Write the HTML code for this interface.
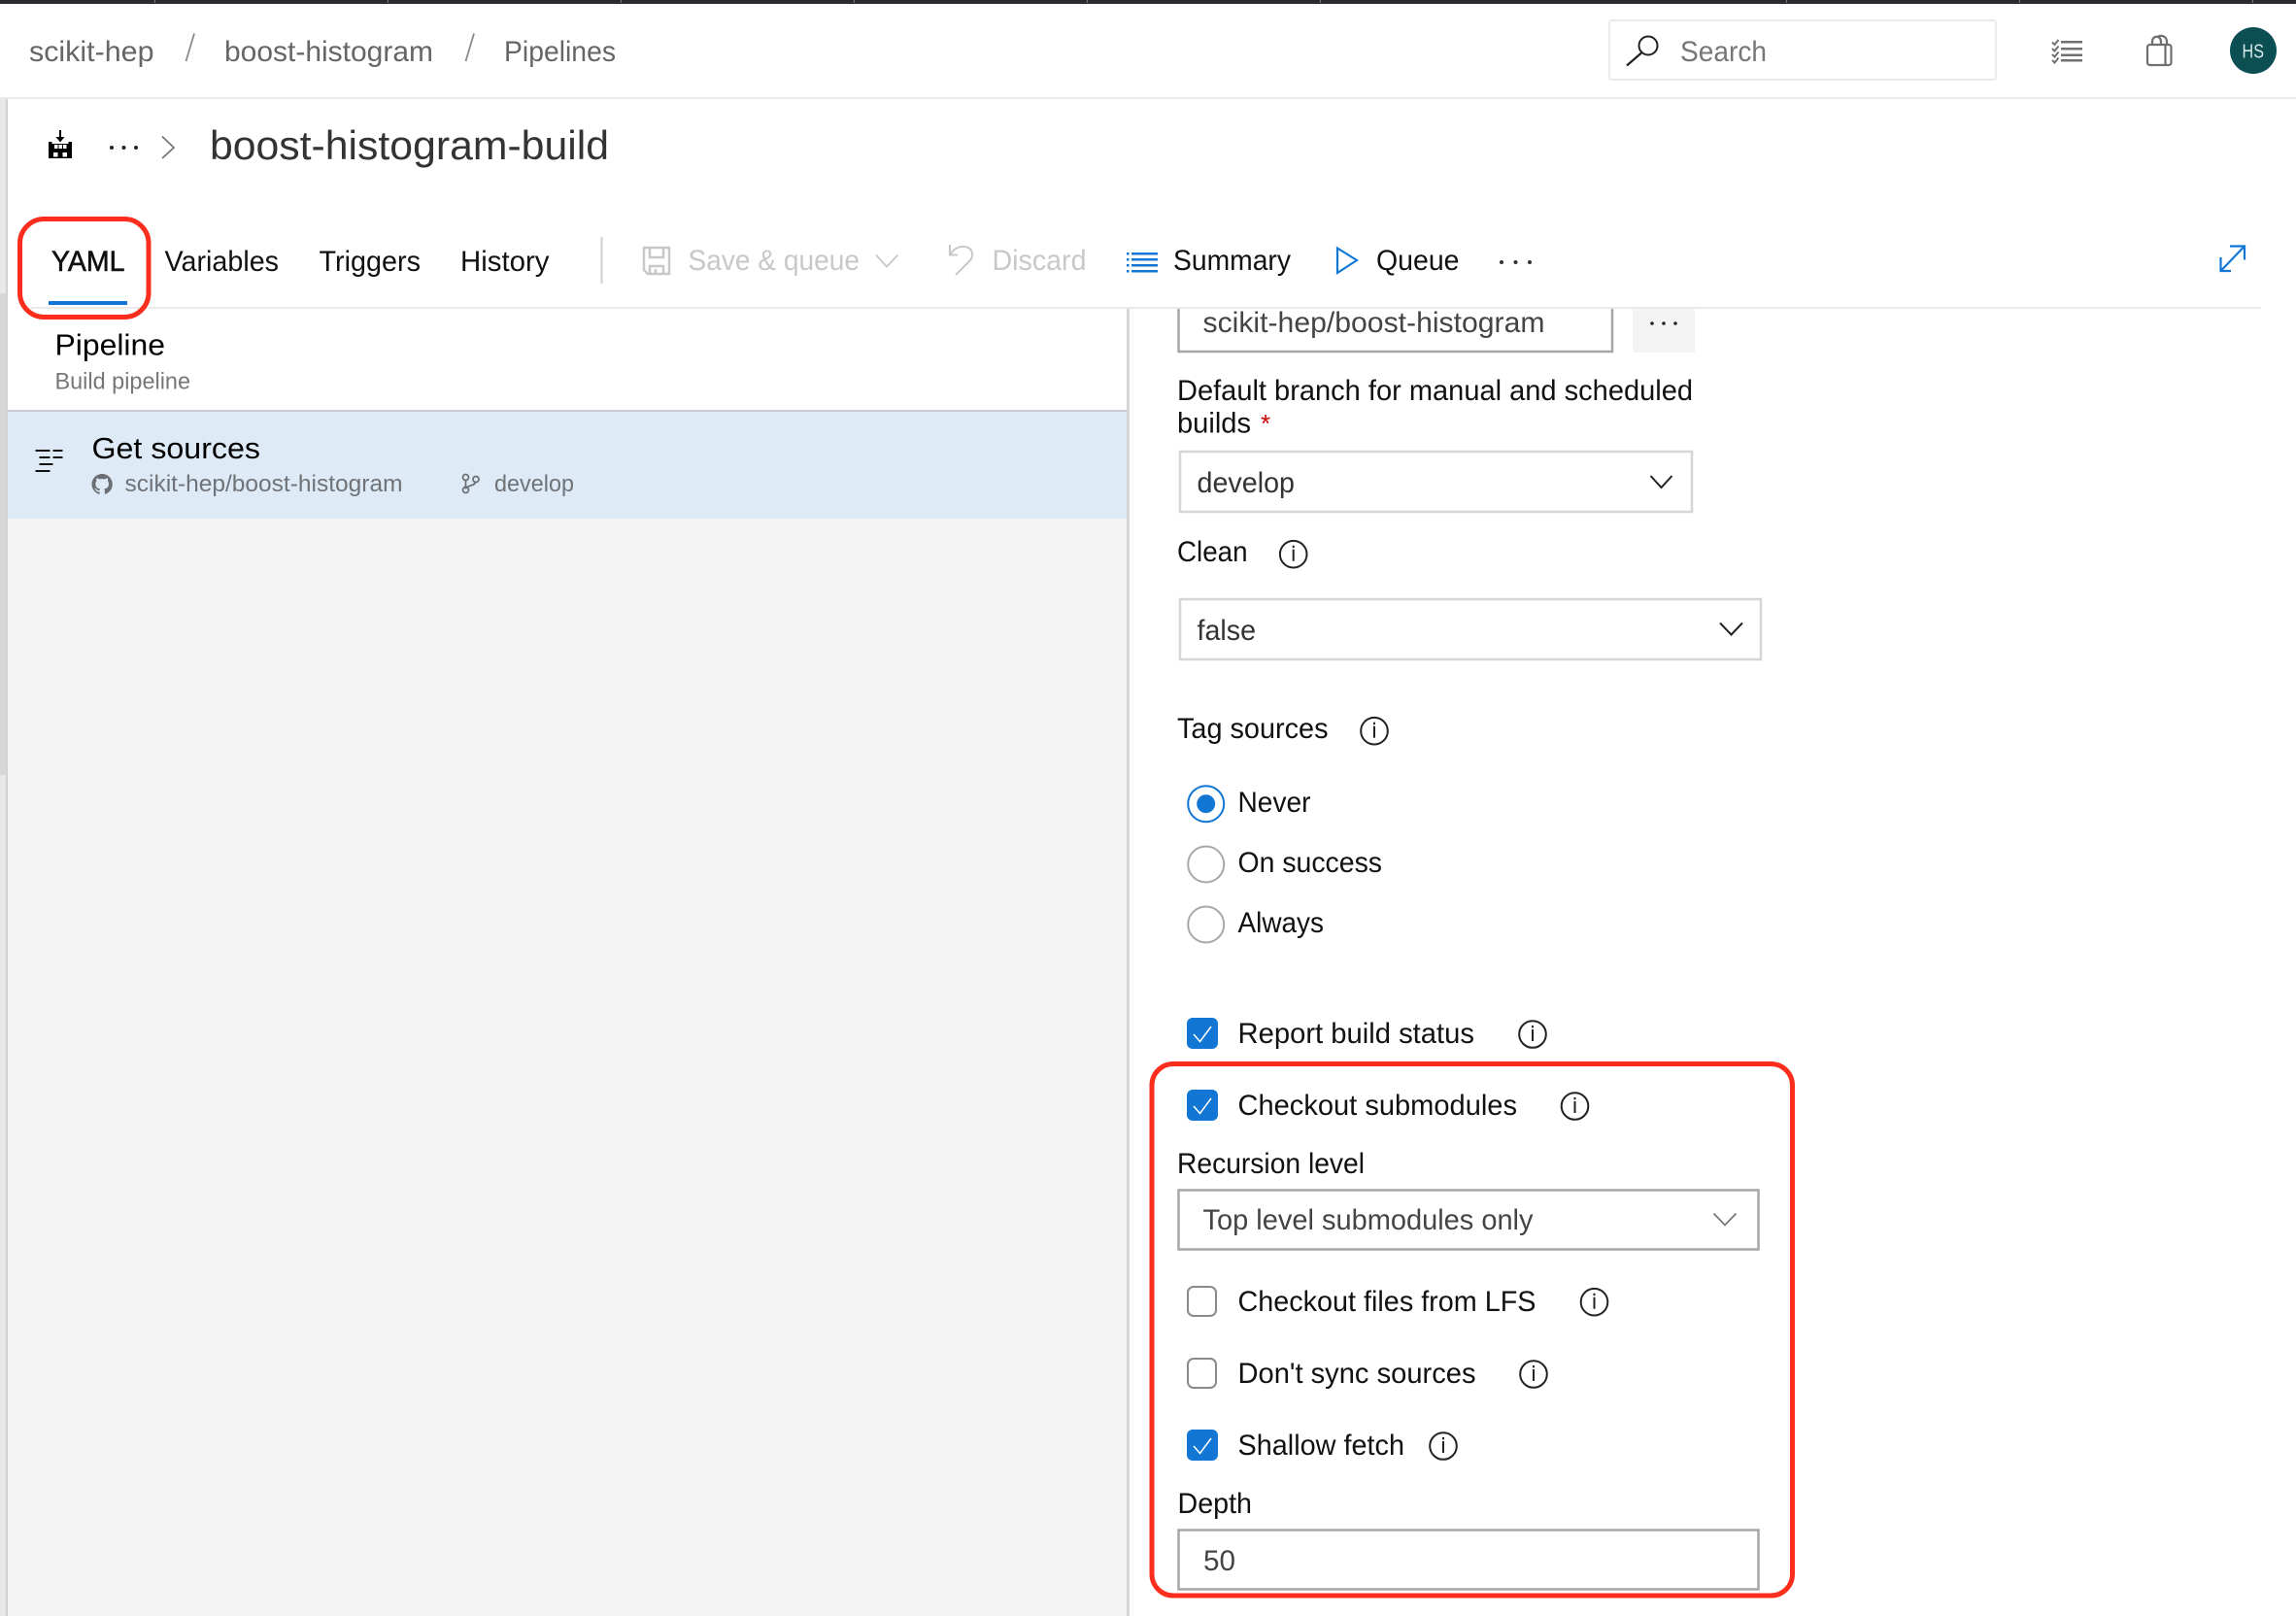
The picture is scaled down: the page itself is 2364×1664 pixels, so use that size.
<!DOCTYPE html>
<html lang="en"><head><meta charset="utf-8"><title>boost-histogram-build</title>
<style>
html,body{margin:0;padding:0;background:#fff;width:2364px;height:1664px;overflow:hidden}
svg{display:block}
text{font-family:"Liberation Sans",Arial,sans-serif;font-size:30px;fill:#111}
.g{fill:#666}.d{fill:#c8c8c8}.m{fill:#444}.s{font-size:24px;fill:#6f7377}
</style></head><body>
<svg width="2364" height="1664" viewBox="0 0 2364 1664" xmlns="http://www.w3.org/2000/svg">
<defs>
<g id="info"><circle r="13.800" fill="none" stroke="#222" stroke-width="2"/><rect x="-1" y="-5" width="2" height="12" fill="#222"/><rect x="-1" y="-9" width="2" height="2.400" fill="#222"/></g>
<g id="chk"><rect width="32" height="32" rx="6" fill="#1277d4"/><path d="M7 17l6.500 7.500L25 9" fill="none" stroke="#fff" stroke-width="1.500"/></g>
<rect id="unc" x="1" y="1" width="29" height="30" rx="6" fill="#fff" stroke="#8a8a8a" stroke-width="2"/>
</defs>

<rect width="2364" height="1664" fill="#fff"/>
<rect x="8" y="534" width="1152" height="1130" fill="#f4f4f4"/>
<rect x="8" y="424" width="1152" height="110" fill="#deebf6"/>
<rect x="8" y="422" width="1152" height="2" fill="#c6ccd2"/>
<rect x="1160" y="318" width="3" height="1346" fill="#d6d6d6"/>

<rect x="0" y="102" width="6" height="1562" fill="#e8e8e8"/>
<rect x="0" y="302" width="6" height="496" fill="#d7d7d7"/>
<rect x="6" y="102" width="2" height="1562" fill="#d2d2d2"/>

<rect width="2364" height="4" fill="#2a2b2e"/>
<g fill="#77787a"><rect x="159" width="1" height="3"/><rect x="399" width="1" height="3"/><rect x="639" width="1" height="3"/><rect x="879" width="1" height="3"/><rect x="1119" width="1" height="3"/><rect x="1359" width="1" height="3"/><rect x="1839" width="1" height="3"/><rect x="2079" width="1" height="3"/><rect x="2319" width="1" height="3"/></g>

<rect x="0" y="100" width="2364" height="2" fill="#eaeaea"/>
<text class="g" x="30" y="63" textLength="128.500" lengthAdjust="spacingAndGlyphs">scikit-hep</text>
<path d="M200 34.500L191.500 63M488 34.500L479.500 63" stroke="#8a8a8a" stroke-width="1.800" fill="none"/>
<text class="g" x="231" y="63" textLength="215" lengthAdjust="spacingAndGlyphs">boost-histogram</text>
<text class="g" x="519" y="63" textLength="115" lengthAdjust="spacingAndGlyphs">Pipelines</text>

<rect x="1657" y="21" width="398" height="61" rx="3" fill="#fff" stroke="#eaeaea" stroke-width="2"/>
<circle cx="1697" cy="47" r="9.500" fill="none" stroke="#222" stroke-width="2"/>
<path d="M1690 54.500L1675 67.500" stroke="#222" stroke-width="2.200" fill="none"/>
<text x="1730" y="63" textLength="89" lengthAdjust="spacingAndGlyphs" style="fill:#777">Search</text>

<g fill="#707070"><rect x="2122" y="42" width="22" height="2.500"/><rect x="2122" y="49" width="22" height="2.500"/><rect x="2122" y="55.500" width="22" height="2.500"/><rect x="2122" y="61" width="22" height="2.500"/></g>
<g fill="none" stroke="#707070" stroke-width="2"><path d="M2113 43.500l2.500 2.500 4-5M2113 50l2.500 2.500 4-5M2113 56l2.500 2.500 4-5M2113 62l2.500 2.500 4-5"/></g>
<g fill="none" stroke="#707070" stroke-width="2.200"><rect x="2211" y="46" width="24.500" height="21" rx="2.500"/><path d="M2229.500 46v21M2216 46v-3c0-7 9-7 9 0v3M2222 37.500c5-2 9 1 9 5.500v3"/></g>
<circle cx="2320" cy="52" r="24" fill="#0b4f52"/>
<text x="2308.500" y="59.500" textLength="22.500" lengthAdjust="spacingAndGlyphs" style="font-size:20px;fill:#d7e6e6">HS</text>

<g fill="#000">
<path d="M61 134h2v7h3.500L62 146.500 57.500 141H61z"/>
<path fill-rule="evenodd" d="M50 146h3.500v2H70.500v-2H74v17H50zM56 149v4h3.500v-4zM60.500 149v4h3.500v-4zM65 149v4h3.500v-4zM55 157v4.500h4.500V157zM64.500 157v4.500H69V157z"/>
</g>
<g fill="#222"><circle cx="115" cy="152" r="2"/><circle cx="127.500" cy="152" r="2"/><circle cx="140" cy="152" r="2"/></g>
<path d="M167 140.500L179 152 167 163" fill="none" stroke="#777" stroke-width="1.800"/>
<text x="216" y="164" textLength="411" lengthAdjust="spacingAndGlyphs" style="font-size:42px;fill:#333">boost-histogram-build</text>

<text x="53" y="279" textLength="75.500" lengthAdjust="spacingAndGlyphs" style="stroke:#111;stroke-width:.6">YAML</text>
<text x="169.500" y="279" textLength="117.500" lengthAdjust="spacingAndGlyphs">Variables</text>
<text x="328.500" y="279" textLength="104.500" lengthAdjust="spacingAndGlyphs">Triggers</text>
<text x="474" y="279" textLength="91.500" lengthAdjust="spacingAndGlyphs">History</text>
<rect x="50" y="310" width="81" height="4" fill="#1277d4"/>
<rect x="32" y="316" width="2296" height="2" fill="#eaeaea"/>
<rect x="618.500" y="244" width="2" height="48" fill="#cfcfcf"/>

<g fill="none" stroke="#c8c8c8" stroke-width="2.500"><path d="M663 255h26v27h-22l-4-4zM669 255v10h14v-10M669 282v-8h14v8M675 282v-5"/></g>
<text class="d" x="708.500" y="278" textLength="176.500" lengthAdjust="spacingAndGlyphs">Save &amp; queue</text>
<path d="M902 262.500L913 274.500 924.500 262.500" fill="none" stroke="#c8c8c8" stroke-width="1.800"/>
<path d="M978 252v10.500h8M978.500 261.500c5-7 12-9 17-7 6 2 7 8 4 13L984 283" fill="none" stroke="#c8c8c8" stroke-width="2"/>
<text class="d" x="1021.500" y="278" textLength="97" lengthAdjust="spacingAndGlyphs">Discard</text>

<g fill="#1277d4"><rect x="1165" y="260" width="27" height="2.500"/><rect x="1165" y="266" width="27" height="2.500"/><rect x="1165" y="272" width="27" height="2.500"/><rect x="1165" y="278" width="27" height="2.500"/><rect x="1160" y="260" width="2.500" height="2.500"/><rect x="1160" y="266" width="2.500" height="2.500"/><rect x="1160" y="272" width="2.500" height="2.500"/><rect x="1160" y="278" width="2.500" height="2.500"/></g>
<text x="1208" y="278" textLength="121" lengthAdjust="spacingAndGlyphs">Summary</text>
<path d="M1377 255.500L1397 268 1377 281z" fill="none" stroke="#1277d4" stroke-width="2.200"/>
<text x="1417" y="278" textLength="85.500" lengthAdjust="spacingAndGlyphs">Queue</text>
<g fill="#333"><circle cx="1546" cy="270" r="2"/><circle cx="1560.500" cy="270" r="2"/><circle cx="1575" cy="270" r="2"/></g>
<g fill="none" stroke="#1277d4" stroke-width="2.200"><path d="M2287 278.500L2311 253.500M2296 253.500h15v14M2286.500 265v14h10.500"/></g>

<text x="56.500" y="365.500" textLength="113.500" lengthAdjust="spacingAndGlyphs" style="fill:#000;font-size:31px">Pipeline</text>
<text class="s" x="56.500" y="400.500" textLength="139.500" lengthAdjust="spacingAndGlyphs" style="fill:#777">Build pipeline</text>

<g fill="#111"><rect x="36.500" y="463" width="15" height="2"/><rect x="54.500" y="463" width="10" height="2"/><rect x="40.500" y="470" width="11" height="2"/><rect x="54.500" y="470" width="10" height="2"/><rect x="40.500" y="477" width="14" height="2"/><rect x="36.500" y="484" width="15" height="2"/></g>
<text x="94.500" y="472" textLength="173.500" lengthAdjust="spacingAndGlyphs" style="fill:#000;font-size:31px">Get sources</text>
<g transform="translate(94.500,488) scale(1.330)"><path fill="#6b6f73" d="M8 0C3.580 0 0 3.580 0 8c0 3.540 2.290 6.530 5.470 7.590.4.070.55-.17.55-.38 0-.19-.01-.82-.01-1.490-2.010.37-2.530-.49-2.690-.94-.09-.23-.48-.94-.82-1.130-.28-.15-.68-.52-.01-.53.63-.01 1.080.58 1.230.82.720 1.210 1.870.870 2.330.66.070-.52.280-.87.510-1.070-1.780-.2-3.640-.89-3.640-3.950 0-.87.310-1.590.820-2.150-.08-.2-.36-1.020.08-2.120 0 0 .67-.21 2.200.82.640-.18 1.320-.27 2-.27s1.360.09 2 .27c1.530-1.040 2.200-.82 2.200-.82.44 1.100.16 1.920.08 2.120.51.56.82 1.270.82 2.150 0 3.070-1.870 3.750-3.650 3.950.29.25.54.73.54 1.480 0 1.070-.01 1.930-.01 2.200 0 .21.150.46.550.38A8.010 8.010 0 0 0 16 8c0-4.420-3.580-8-8-8z"/></g>
<text class="s" x="128.500" y="506" textLength="286" lengthAdjust="spacingAndGlyphs">scikit-hep/boost-histogram</text>
<g fill="none" stroke="#6b6f73" stroke-width="1.700"><circle cx="479.500" cy="491.500" r="3"/><circle cx="479.500" cy="504.500" r="3"/><circle cx="490" cy="493.500" r="3"/><path d="M479.500 494.500v7M489.500 496.500c-.5 4-10 3.500-10 7"/></g>
<text class="s" x="509" y="506" textLength="82" lengthAdjust="spacingAndGlyphs">develop</text>

<path d="M1213.500 318V362H1660V318" fill="#fff" stroke="#a6a6a6" stroke-width="2.500"/>
<text class="m" x="1238.500" y="342" textLength="352" lengthAdjust="spacingAndGlyphs">scikit-hep/boost-histogram</text>
<rect x="1681" y="318" width="64" height="45" fill="#f4f4f4"/>
<g fill="#222"><circle cx="1701" cy="333" r="1.800"/><circle cx="1713" cy="333" r="1.800"/><circle cx="1725" cy="333" r="1.800"/></g>

<text x="1212" y="412" textLength="531" lengthAdjust="spacingAndGlyphs">Default branch for manual and scheduled</text>
<text x="1212" y="445.500" textLength="76" lengthAdjust="spacingAndGlyphs">builds</text>
<text x="1298" y="445" style="fill:#c00;font-size:26px">*</text>

<rect x="1215" y="465" width="527" height="62" fill="#fff" stroke="#d6d6d6" stroke-width="2.500"/>
<text x="1232.500" y="507" textLength="100.500" lengthAdjust="spacingAndGlyphs" style="fill:#333">develop</text>
<path d="M1699.500 490L1710.500 502 1721.500 490" fill="none" stroke="#222" stroke-width="2"/>

<text x="1212" y="578" textLength="72.500" lengthAdjust="spacingAndGlyphs">Clean</text>
<use href="#info" x="1331.700" y="570.700"/>

<rect x="1215" y="617" width="598" height="62" fill="#fff" stroke="#d6d6d6" stroke-width="2.500"/>
<text x="1232.500" y="659" textLength="60.500" lengthAdjust="spacingAndGlyphs" style="fill:#333">false</text>
<path d="M1771 641.500L1782.500 653.500 1794 641.500" fill="none" stroke="#222" stroke-width="2"/>

<text x="1212" y="760" textLength="155.500" lengthAdjust="spacingAndGlyphs">Tag sources</text>
<use href="#info" x="1415" y="752.700"/>

<circle cx="1241.700" cy="827.700" r="18.500" fill="#fff" stroke="#1277d4" stroke-width="2"/>
<circle cx="1241.700" cy="827.700" r="9.500" fill="#1277d4"/>
<text x="1274.500" y="836" textLength="75" lengthAdjust="spacingAndGlyphs">Never</text>
<circle cx="1241.700" cy="890" r="18.500" fill="#fff" stroke="#a8a8a8" stroke-width="2"/>
<text x="1274.500" y="898" textLength="148.500" lengthAdjust="spacingAndGlyphs">On success</text>
<circle cx="1241.700" cy="952" r="18.500" fill="#fff" stroke="#a8a8a8" stroke-width="2"/>
<text x="1274.500" y="960" textLength="88.500" lengthAdjust="spacingAndGlyphs">Always</text>

<use href="#chk" x="1222" y="1048"/>
<text x="1274.500" y="1074" textLength="243.500" lengthAdjust="spacingAndGlyphs">Report build status</text>
<use href="#info" x="1578" y="1065"/>

<use href="#chk" x="1222" y="1122"/>
<text x="1274.500" y="1148" textLength="287.500" lengthAdjust="spacingAndGlyphs">Checkout submodules</text>
<use href="#info" x="1621.500" y="1139"/>
<text x="1212" y="1208" textLength="193" lengthAdjust="spacingAndGlyphs">Recursion level</text>

<rect x="1213.500" y="1225.500" width="597" height="61" fill="#fff" stroke="#a6a6a6" stroke-width="2.500"/>
<text class="m" x="1238.500" y="1266" textLength="340" lengthAdjust="spacingAndGlyphs">Top level submodules only</text>
<path d="M1764.500 1249.500L1776 1261.500 1787.500 1249.500" fill="none" stroke="#777" stroke-width="1.800"/>

<use href="#unc" x="1222" y="1324"/>
<text x="1274.500" y="1350" textLength="307" lengthAdjust="spacingAndGlyphs">Checkout files from LFS</text>
<use href="#info" x="1641.500" y="1340.700"/>

<use href="#unc" x="1222" y="1398"/>
<text x="1274.500" y="1424" textLength="245" lengthAdjust="spacingAndGlyphs">Don't sync sources</text>
<use href="#info" x="1579" y="1415"/>

<use href="#chk" x="1222" y="1472"/>
<text x="1274.500" y="1498" textLength="171.500" lengthAdjust="spacingAndGlyphs">Shallow fetch</text>
<use href="#info" x="1486" y="1489"/>

<text x="1212.500" y="1558" textLength="76.500" lengthAdjust="spacingAndGlyphs">Depth</text>
<rect x="1213.500" y="1575.500" width="597" height="61" fill="#fff" stroke="#a6a6a6" stroke-width="2.500"/>
<text class="m" x="1239" y="1617" textLength="33" lengthAdjust="spacingAndGlyphs">50</text>

<rect x="20.500" y="225.500" width="132.500" height="101" rx="25" fill="none" stroke="#fb2e1d" stroke-width="5"/>
<rect x="1186" y="1095.500" width="659.500" height="547.500" rx="22" fill="none" stroke="#fb2e1d" stroke-width="5"/>
</svg>
</body></html>
